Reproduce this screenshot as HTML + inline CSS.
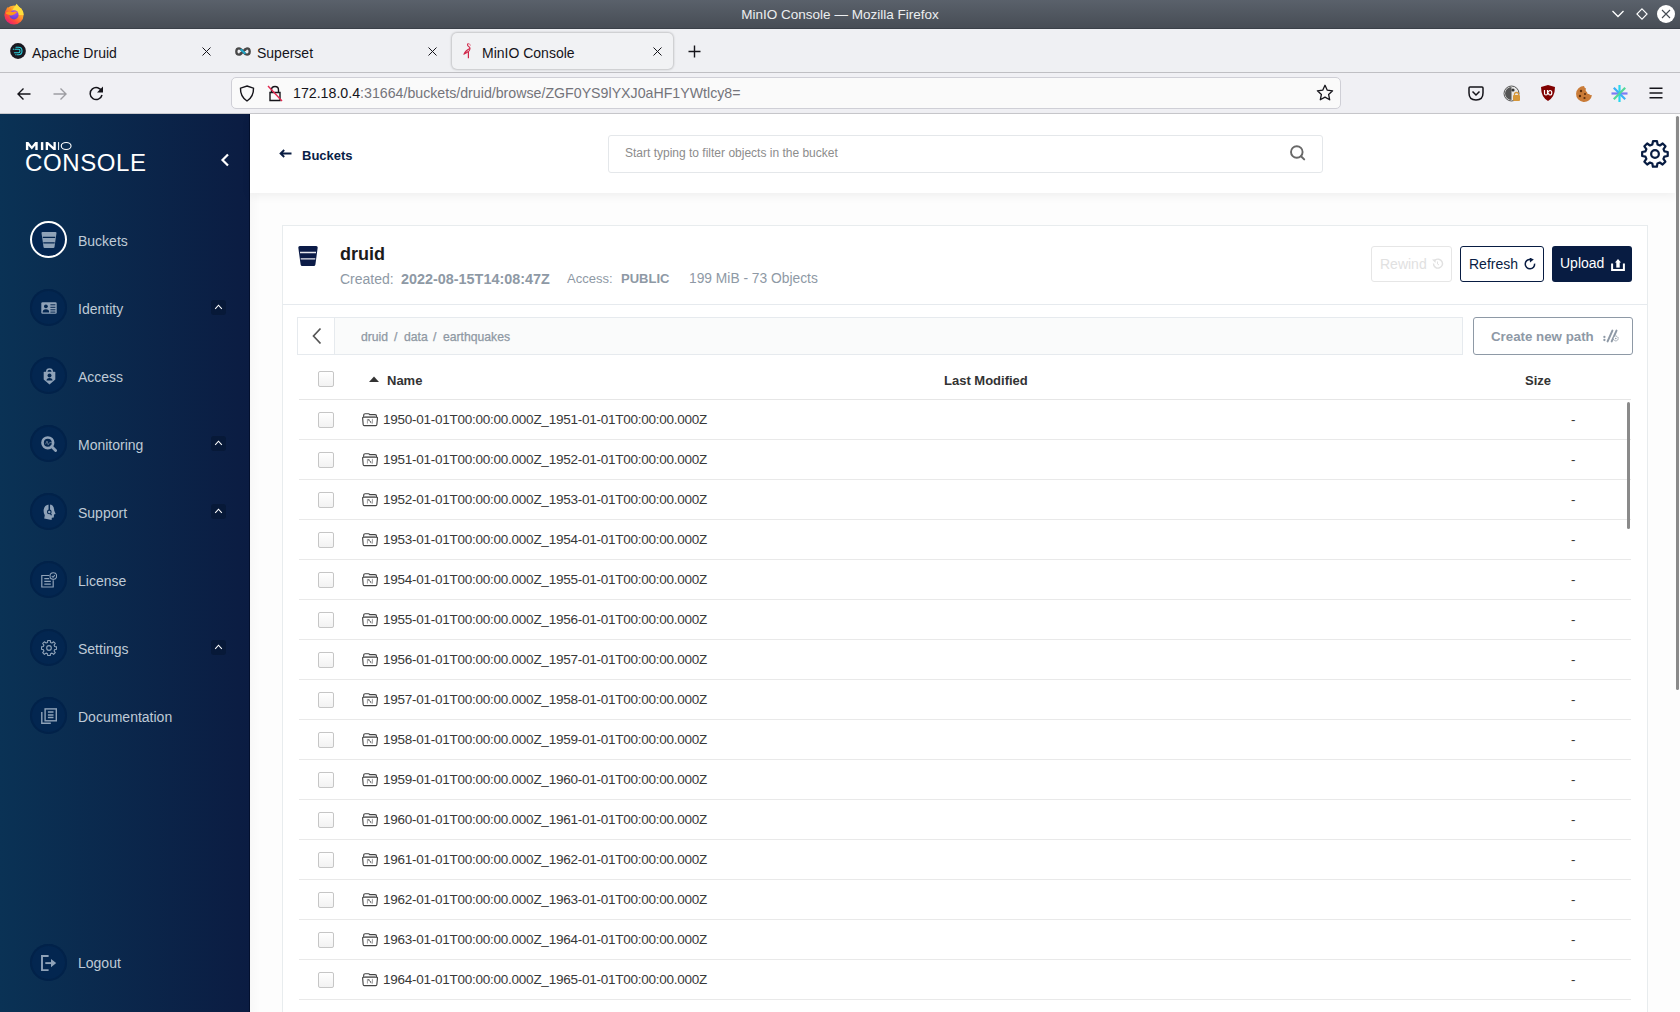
<!DOCTYPE html>
<html><head><meta charset="utf-8">
<style>
*{box-sizing:border-box;margin:0;padding:0}
html,body{width:1680px;height:1012px;overflow:hidden;font-family:"Liberation Sans",sans-serif;background:#fff}
.a{position:absolute;white-space:nowrap}
#titlebar{left:0;top:0;width:1680px;height:29px;background:linear-gradient(#5a616b,#474d55);border-bottom:1px solid #3a4048}
#tabbar{left:0;top:29px;width:1680px;height:43px;background:#eff0f3}
#navbar{left:0;top:72px;width:1680px;height:42px;background:#f0f0f4;border-top:1px solid #bfbfc3;border-bottom:1px solid #c9c9cd}
.tl{font-size:14px;line-height:14px;color:#15141a}
#acttab{left:452px;top:33px;width:221px;height:36px;background:#f1f2f4;border-radius:5px;box-shadow:0 0 2px 1px rgba(0,0,0,.18)}
#url{left:231px;top:77px;width:1110px;height:32px;background:#fafafa;border:1px solid #cfcfd6;border-radius:5px}
#sidebar{left:0;top:114px;width:250px;height:898px;background:linear-gradient(90deg,#0a3255 0%,#0b1c42 100%)}
.mi{left:30px;width:37px;height:37px;border-radius:50%;background:#032650;box-shadow:inset 0 0 0 2px #022249}
.ml{left:78px;font-size:14px;line-height:14px;color:#bfcad6}
.chev{left:211px;width:15px;height:15px;background:#071938;border-radius:3px}
#main{left:250px;top:114px;width:1430px;height:898px;background:#fdfdfd}
#hdr{left:250px;top:114px;width:1425px;height:79px;background:#fff;box-shadow:0 3px 9px rgba(0,0,0,.06)}
#card{left:282px;top:225px;width:1366px;height:800px;background:#fff;border:1px solid #e8ecee}
.row{left:299px;width:1332px;height:40px;border-bottom:1px solid #e9e9e9}
.cb{width:16px;height:16px;border:1px solid #c6c6c6;border-radius:2px;background:linear-gradient(#fff,#f2f2f2)}
.fn{font-size:13.5px;line-height:13px;color:#383838;letter-spacing:-.25px}
.bc{top:331px;font-size:12.2px;line-height:12px;color:#8e98a3;-webkit-text-stroke:.25px #8e98a3}
.btn{top:246px;height:36px;border-radius:3px;font-size:14px;line-height:14px}
</style></head><body>
<svg width="0" height="0" style="position:absolute">
<defs>
<g id="fold"><path d="M1.7 4.3 V2.1 Q1.7 .7 3.1 .7 H6.4 Q7.2 .7 7.7 1.6 H13.1 Q14.5 1.6 14.5 3 V4.2" fill="none" stroke="#444" stroke-width="1.15"/><path d="M2.6 3.6 H13.6" stroke="#9a9a9a" stroke-width=".9"/><path d="M.6 4.9 Q.6 4.2 1.3 4.2 H14.8 Q15.5 4.2 15.5 4.9 L14.8 11.7 Q14.7 12.6 13.8 12.6 H2.2 Q1.3 12.6 1.2 11.7 Z" fill="none" stroke="#444" stroke-width="1.15"/><path d="M5.4 5.9 V10.6 M10.4 5.9 V10.6" stroke="#a0a0a0" stroke-width="1"/><path d="M6.3 6.2 L9.5 10.3" stroke="#777" stroke-width=".8"/><circle cx="6.9" cy="6.9" r=".65" fill="#333"/><circle cx="8.6" cy="8.8" r=".6" fill="#444"/></g>
</defs></svg>
<!-- title bar -->
<div id="titlebar" class="a"></div>
<div class="a" style="left:0;top:8px;width:1680px;text-align:center;color:#eceef0;font-size:13.5px;line-height:14px">MinIO Console — Mozilla Firefox</div>
<svg class="a" style="left:3px;top:3px" width="22" height="22" viewBox="0 0 22 22"><defs><linearGradient id="ffg" x1="1" y1="0" x2=".2" y2="1"><stop offset="0" stop-color="#ffe94a"/><stop offset=".4" stop-color="#ffa22c"/><stop offset=".72" stop-color="#ff4a3a"/><stop offset="1" stop-color="#e3187f"/></linearGradient><radialGradient id="ffp" cx=".6" cy=".25" r=".8"><stop offset="0" stop-color="#b24cf0"/><stop offset="1" stop-color="#5a3fd6"/></radialGradient></defs><circle cx="11" cy="12" r="9.6" fill="url(#ffg)"/><path d="M9 7.5 Q11.5 4 13.6 .8 Q16 4 18.5 6 Q21 9 20.6 12 L14 12 Z" fill="#ffde3c"/><path d="M3.6 6.5 L4.8 3.8 L6 6.6 L7.4 4.4 L8 8 Z" fill="#ff8a1e"/><circle cx="11" cy="11.8" r="4.6" fill="url(#ffp)"/><path d="M3 9.5 Q6.5 7.8 10 9 Q12 7.6 14.5 9.4 Q12.5 9.6 12 11 Q9 13 7 12.2 Q5 11.5 3 10.8 Z" fill="#ff9a1a"/></svg>
<svg class="a" style="left:1611px;top:9px" width="14" height="10" viewBox="0 0 14 10"><path d="M1.5 2 L7 7.5 L12.5 2" fill="none" stroke="#fff" stroke-width="1.3"/></svg>
<svg class="a" style="left:1636px;top:8px" width="12" height="12" viewBox="0 0 12 12"><path d="M6 .9 L11.1 6 L6 11.1 L.9 6 Z" fill="none" stroke="#fff" stroke-width="1.1"/></svg>
<svg class="a" style="left:1657px;top:5px" width="18" height="18" viewBox="0 0 18 18"><circle cx="9" cy="9" r="9" fill="#fff"/><path d="M5 5 L13 13 M13 5 L5 13" stroke="#454b53" stroke-width="1.1"/></svg>
<!-- tab bar -->
<div id="tabbar" class="a"></div>
<div id="acttab" class="a"></div>
<svg class="a" style="left:10px;top:43px" width="16" height="16" viewBox="0 0 16 16"><circle cx="8" cy="8" r="7.9" fill="#1a1820"/><path d="M6 4.3 H8.5 Q12 4.3 12 8 Q12 11.7 8.5 11.7 H7.3 M5 6.3 H8.6 Q10 6.3 10 8 Q10 9.7 8.6 9.7 H4.4" fill="none" stroke="#2bd3e0" stroke-width="1.1" stroke-linecap="round"/><circle cx="3.4" cy="6.2" r=".6" fill="#2bd3e0"/><circle cx="5.9" cy="11.7" r=".6" fill="#2bd3e0"/></svg>
<div class="a tl" style="left:32px;top:46px">Apache Druid</div>
<svg class="a" style="left:202px;top:47px" width="9" height="9" viewBox="0 0 9 9"><path d="M.5 .5 L8.5 8.5 M8.5 .5 L.5 8.5" stroke="#15141a" stroke-width="1"/></svg>
<svg class="a" style="left:235px;top:46.5px" width="16" height="9" viewBox="0 0 16 9"><path d="M8 4.5 C6.3 2 5.2 1.3 4 1.3 C2.2 1.3 1.3 2.7 1.3 4.5 C1.3 6.3 2.2 7.7 4 7.7 C5.2 7.7 6.3 7 8 4.5 C9.7 2 10.8 1.3 12 1.3 C13.8 1.3 14.7 2.7 14.7 4.5 C14.7 6.3 13.8 7.7 12 7.7 C10.8 7.7 9.7 7 8 4.5" fill="none" stroke="#484848" stroke-width="2.3"/><path d="M5.6 2.3 L10.4 6.7" stroke="#20a7c9" stroke-width="2.1"/><path d="M4.8 6.9 L6.6 5.6" stroke="#484848" stroke-width="2.1"/><path d="M9.6 3.3 L11.2 2.1" stroke="#484848" stroke-width="2.1"/></svg>
<div class="a tl" style="left:257px;top:46px">Superset</div>
<svg class="a" style="left:428px;top:47px" width="9" height="9" viewBox="0 0 9 9"><path d="M.5 .5 L8.5 8.5 M8.5 .5 L.5 8.5" stroke="#15141a" stroke-width="1"/></svg>
<svg class="a" style="left:462px;top:42px" width="11" height="17" viewBox="0 0 11 17"><path d="M6.5 1.6 Q5.5 1.6 5.5 2.8 Q5.5 3.8 6.7 4.5 Q8.2 5.3 8 6.8 Q7.8 8.6 6.3 9.7" fill="none" stroke="#d0284a" stroke-width="1.1"/><path d="M6.2 1.5 Q8.3 1.8 8.5 3.6" fill="none" stroke="#e06a80" stroke-width=".9"/><path d="M8 6.5 Q6 7.2 4.2 9 Q2.5 10.8 2.2 12 Q3.8 11.4 6.4 9.6" fill="none" stroke="#d0284a" stroke-width="1.2"/><path d="M6.4 9.5 V16.2" stroke="#d0284a" stroke-width="1.2"/></svg>
<div class="a tl" style="left:482px;top:46px">MinIO Console</div>
<svg class="a" style="left:653px;top:47px" width="9" height="9" viewBox="0 0 9 9"><path d="M.5 .5 L8.5 8.5 M8.5 .5 L.5 8.5" stroke="#15141a" stroke-width="1"/></svg>
<svg class="a" style="left:688px;top:45px" width="13" height="13" viewBox="0 0 13 13"><path d="M6.5 .5 V12.5 M.5 6.5 H12.5" stroke="#15141a" stroke-width="1.4"/></svg>
<!-- nav bar -->
<div id="navbar" class="a"></div>
<svg class="a" style="left:16px;top:86px" width="16" height="16" viewBox="0 0 16 16"><path d="M14.5 8 H2 M7.5 2.5 L2 8 L7.5 13.5" fill="none" stroke="#15141a" stroke-width="1.4"/></svg>
<svg class="a" style="left:52px;top:86px" width="16" height="16" viewBox="0 0 16 16"><path d="M1.5 8 H14 M8.5 2.5 L14 8 L8.5 13.5" fill="none" stroke="#9d9da2" stroke-width="1.4"/></svg>
<svg class="a" style="left:88px;top:85px" width="17" height="17" viewBox="0 0 17 17"><path d="M13.8 6.5 A6 6 0 1 0 14 10" fill="none" stroke="#15141a" stroke-width="1.5"/><path d="M15 1.5 V7.5 H9 Z" fill="#15141a"/></svg>
<div id="url" class="a"></div>
<svg class="a" style="left:239px;top:85px" width="16" height="17" viewBox="0 0 16 17"><path d="M8 1 L14.5 3.2 Q14.8 11.5 8 16 Q1.2 11.5 1.5 3.2 Z" fill="none" stroke="#15141a" stroke-width="1.4"/></svg>
<svg class="a" style="left:267px;top:85px" width="16" height="17" viewBox="0 0 16 17"><path d="M4.5 7.5 V5 Q4.5 1.5 8 1.5 Q11.5 1.5 11.5 5 V7.5 M3 7.5 H13 V15.5 H3 Z" fill="none" stroke="#15141a" stroke-width="1.4"/><path d="M1 1 L15 16" stroke="#e22850" stroke-width="1.4"/></svg>
<div class="a" style="left:293px;top:86px;font-size:14.2px;line-height:14px;color:#74747a"><span style="color:#15141a">172.18.0.4</span>:31664/buckets/druid/browse/ZGF0YS9lYXJ0aHF1YWtlcy8=</div>
<svg class="a" style="left:1316px;top:84px" width="18" height="18" viewBox="0 0 18 18"><path d="M9 1.3 L11.3 6.2 L16.6 6.8 L12.6 10.4 L13.7 15.8 L9 13.1 L4.3 15.8 L5.4 10.4 L1.4 6.8 L6.7 6.2 Z" fill="none" stroke="#15141a" stroke-width="1.3" stroke-linejoin="round"/></svg>
<svg class="a" style="left:1468px;top:86px" width="16" height="15" viewBox="0 0 16 15"><path d="M2 1 H14 Q15 1 15 2 V7 Q15 14 8 14 Q1 14 1 7 V2 Q1 1 2 1 Z M4.5 5.5 L8 9 L11.5 5.5" fill="none" stroke="#15141a" stroke-width="1.5"/></svg>
<svg class="a" style="left:1503px;top:85px" width="18" height="18" viewBox="0 0 18 18"><circle cx="8.5" cy="8.5" r="7.5" fill="#e8e8e8" stroke="#555" stroke-width="1"/><path d="M8.5 2 A6.5 6.5 0 0 0 8.5 15 Z" fill="#555"/><circle cx="10" cy="5" r="1.6" fill="#333"/><rect x="10" y="10" width="7" height="6" rx="1" fill="#d6973a"/><path d="M11.5 10 V8.5 Q13.5 6.5 15.5 8.5 V10" fill="none" stroke="#d6973a" stroke-width="1.2"/></svg>
<svg class="a" style="left:1540px;top:84px" width="16" height="18" viewBox="0 0 16 18"><path d="M8 1 L15 3 Q15 13 8 17 Q1 13 1 3 Z" fill="#800000"/><path d="M4.5 6 V9.5 Q4.5 11 6 11 Q7.5 11 7.5 9.5 V6 M8.5 8.5 Q8.5 6.5 10 6.5 Q11.8 6.5 11.8 8.7 Q11.8 11 10 11 Q8.5 11 8.5 9" fill="none" stroke="#fff" stroke-width="1.2"/></svg>
<svg class="a" style="left:1575px;top:85px" width="18" height="18" viewBox="0 0 18 18"><path d="M9 1 A8 8 0 1 0 17 10 Q15 10.5 14 9 Q12 9.5 12 7 Q10 6 11 3.5 Q9.5 3 9 1 Z" fill="#c97b38"/><circle cx="6" cy="6" r="1.2" fill="#5a2e0e"/><circle cx="5" cy="11" r="1.2" fill="#5a2e0e"/><circle cx="9.5" cy="13" r="1.1" fill="#5a2e0e"/><circle cx="10" cy="9" r="1" fill="#5a2e0e"/></svg>
<svg class="a" style="left:1610px;top:84px" width="19" height="19" viewBox="0 0 19 19"><path d="M9.5 1 V18" stroke="#27d7f0" stroke-width="2.2"/><path d="M1.5 9.5 H17.5" stroke="#7b7bf4" stroke-width="2.2"/><path d="M3.8 3.8 L15.2 15.2" stroke="#3ab0f6" stroke-width="2.2"/><path d="M15.2 3.8 L3.8 15.2" stroke="#52d89a" stroke-width="2.2"/></svg>
<svg class="a" style="left:1649px;top:87px" width="14" height="12" viewBox="0 0 14 12"><path d="M.5 1.2 H13.5 M.5 6 H13.5 M.5 10.8 H13.5" stroke="#15141a" stroke-width="1.4"/></svg>
<!-- sidebar -->
<div id="sidebar" class="a"></div>
<div class="a" style="left:249px;top:114px;width:1px;height:898px;background:#03102e"></div>
<svg class="a" style="left:25px;top:141px" width="48" height="10" viewBox="0 0 48 10"><path d="M.9 1.1 H3.4 L6.8 5.3 L10.2 1.1 H12.7 V9 H10.3 V4.6 L6.8 8.4 L3.3 4.6 V9 H.9 Z" fill="#fff"/><path d="M15.9 1.1 H18.3 V9 H15.9 Z" fill="#fff"/><path d="M20.7 1.1 H23 L28.5 6 V1.1 H30.8 V9 H28.5 L23 4.1 V9 H20.7 Z" fill="#fff"/><path d="M33.6 1.1 V9" stroke="#fff" stroke-width="1"/><ellipse cx="41.15" cy="5" rx="4.9" ry="3.55" fill="none" stroke="#fff" stroke-width="1.1"/></svg>
<div class="a" style="left:25px;top:151px;font-size:24px;line-height:24px;color:#fff;letter-spacing:.6px">CONSOLE</div>
<svg class="a" style="left:220px;top:153px" width="10" height="14" viewBox="0 0 10 14"><path d="M8 1.5 L2.5 7 L8 12.5" fill="none" stroke="#fff" stroke-width="2.2"/></svg>

<div class="a" style="left:30px;top:221px;width:37px;height:37px;border-radius:50%;background:#032550;border:2px solid #fff"></div>
<svg class="a" style="left:41px;top:232px" width="16" height="16" viewBox="0 0 16 16"><path d="M0.5 1 Q0.5 0 1.5 0 H14.5 Q15.5 0 15.5 1 L13.5 15 Q13.4 16 12.4 16 H3.6 Q2.6 16 2.5 15 Z" fill="#8fa2b8"/><path d="M1.8 5.3 H14.2 M2.3 10.8 H13.7" stroke="#032550" stroke-width="1.3"/></svg>
<div class="a ml" style="left:78px;top:234px">Buckets</div>

<div class="a mi" style="top:289px"></div>
<svg class="a" style="left:41px;top:300px" width="16" height="16" viewBox="0 0 16 16"><rect x=".3" y="2.3" width="15.4" height="11.5" rx="1.3" fill="#8fa2b8"/><circle cx="4.9" cy="6.3" r="1.9" fill="#032650"/><path d="M1.6 12.6 Q1.6 9.3 4.9 9.3 Q8.2 9.3 8.2 12.6 Z" fill="#032650"/><path d="M9.4 4.8 H14.4 M9.4 7.3 H14.4 M9.4 9.8 H14.4 M9.4 12.1 H14.4" stroke="#032650" stroke-width="1"/></svg>
<div class="a ml" style="top:302px">Identity</div>
<div class="a chev" style="top:300px"></div>
<svg class="a" style="left:213px;top:303px" width="11" height="8" viewBox="0 0 11 8"><path d="M2.2 5.9 L5.5 2.2 L8.8 5.9" fill="none" stroke="#fff" stroke-width="1.05"/></svg>

<div class="a mi" style="top:357px"></div>
<svg class="a" style="left:42.5px;top:367.5px" width="13" height="17" viewBox="0 0 13 17"><path d="M3.8 4 V3.2 Q3.8 .9 6.5 .9 Q9.2 .9 9.2 3.2 V4" fill="none" stroke="#8fa2b8" stroke-width="1.5"/><path d="M1.5 3.8 H11.5 Q12.3 3.8 12.3 4.6 V11.6 L6.5 16.6 L.7 11.6 V4.6 Q.7 3.8 1.5 3.8 Z" fill="#8fa2b8"/><circle cx="6.5" cy="7.4" r="2" fill="#032650"/><path d="M3.5 12.4 Q3.5 9.9 6.5 9.9 Q9.5 9.9 9.5 12.4 Z" fill="#032650"/></svg>
<div class="a ml" style="top:370px">Access</div>

<div class="a mi" style="top:425px"></div>
<svg class="a" style="left:41px;top:436px" width="16" height="16" viewBox="0 0 16 16"><circle cx="6.8" cy="6.8" r="5.3" fill="none" stroke="#8fa2b8" stroke-width="2.7"/><path d="M10.6 10.6 L14.6 14.6" stroke="#8fa2b8" stroke-width="2.8" stroke-linecap="round"/><path d="M4.6 8.2 L6 5 L7.2 8.8 L8.6 6.6 H11" fill="none" stroke="#6d8299" stroke-width=".8"/></svg>
<div class="a ml" style="top:438px">Monitoring</div>
<div class="a chev" style="top:436px"></div>
<svg class="a" style="left:213px;top:439px" width="11" height="8" viewBox="0 0 11 8"><path d="M2.2 5.9 L5.5 2.2 L8.8 5.9" fill="none" stroke="#fff" stroke-width="1.05"/></svg>

<div class="a mi" style="top:493px"></div>
<svg class="a" style="left:42.5px;top:504px" width="14" height="17" viewBox="0 0 14 17"><path d="M6.3 .6 Q.8 .9 .6 6.8 Q.6 9.6 1.8 11.3 L1.2 14.4 L8.6 16 L8.8 13.8 L10.8 13.4 L11 10.6 L12.6 10 L11.2 6.6 Q11 .6 6.3 .6 Z" fill="#8fa2b8"/><path d="M6.3 0 V6" stroke="#032650" stroke-width="1.5"/><circle cx="6.3" cy="7.9" r="1.8" fill="none" stroke="#032650" stroke-width="1.1"/><path d="M7.4 9.4 L8.5 11.2" stroke="#032650" stroke-width="1.1"/></svg>
<div class="a ml" style="top:506px">Support</div>
<div class="a chev" style="top:504px"></div>
<svg class="a" style="left:213px;top:507px" width="11" height="8" viewBox="0 0 11 8"><path d="M2.2 5.9 L5.5 2.2 L8.8 5.9" fill="none" stroke="#fff" stroke-width="1.05"/></svg>

<div class="a mi" style="top:561px"></div>
<svg class="a" style="left:41px;top:572px" width="16" height="16" viewBox="0 0 16 16"><path d="M8.3 3.5 H.8 V15 H12.2 V8.2" fill="none" stroke="#8fa2b8" stroke-width="1.2"/><path d="M3.3 6.7 H8.2 M3.3 9.3 H9.8 M3.3 12.1 H9.8" stroke="#8fa2b8" stroke-width="1.2"/><circle cx="12.3" cy="4.1" r="3.3" fill="none" stroke="#8fa2b8" stroke-width="1.1"/><path d="M10.8 4.2 L12 5.3 L13.8 3.1" fill="none" stroke="#8fa2b8" stroke-width="1.1"/></svg>
<div class="a ml" style="top:574px">License</div>

<div class="a mi" style="top:629px"></div>
<svg class="a" style="left:41px;top:640px" width="16" height="16" viewBox="0 0 24 24"><path d="M10.2 1 H13.8 L14.3 4 L16.4 4.9 L18.9 3.1 L21.4 5.6 L19.6 8.1 L20.5 10.2 L23.3 10.7 V14.3 L20.5 14.8 L19.6 16.9 L21.4 19.4 L18.9 21.9 L16.4 20.1 L14.3 21 L13.8 23.8 H10.2 L9.7 21 L7.6 20.1 L5.1 21.9 L2.6 19.4 L4.4 16.9 L3.5 14.8 L.7 14.3 V10.7 L3.5 10.2 L4.4 8.1 L2.6 5.6 L5.1 3.1 L7.6 4.9 L9.7 4 Z" transform="translate(0,-.4)" fill="none" stroke="#8fa2b8" stroke-width="1.7" stroke-linejoin="round"/><circle cx="12" cy="12" r="3.5" fill="none" stroke="#8fa2b8" stroke-width="1.7"/></svg>
<div class="a ml" style="top:642px">Settings</div>
<div class="a chev" style="top:640px"></div>
<svg class="a" style="left:213px;top:643px" width="11" height="8" viewBox="0 0 11 8"><path d="M2.2 5.9 L5.5 2.2 L8.8 5.9" fill="none" stroke="#fff" stroke-width="1.05"/></svg>

<div class="a mi" style="top:697px"></div>
<svg class="a" style="left:41px;top:708px" width="16" height="16" viewBox="0 0 16 16"><path d="M.8 4 V15.2 H9.8" fill="none" stroke="#8fa2b8" stroke-width="1.4"/><rect x="4.1" y=".9" width="11.2" height="11.9" fill="none" stroke="#8fa2b8" stroke-width="1.4"/><path d="M6.9 4.1 H12.5 M6.9 6.9 H12.5 M6.9 9.6 H12.5" stroke="#8fa2b8" stroke-width="1.5"/></svg>
<div class="a ml" style="top:710px">Documentation</div>

<div class="a mi" style="top:944px"></div>
<svg class="a" style="left:41px;top:955px" width="16" height="16" viewBox="0 0 16 16"><path d="M7.6 1 H1 V15.2 H7.6" fill="none" stroke="#8fa2b8" stroke-width="1.9"/><path d="M4.3 8.1 H11" stroke="#8fa2b8" stroke-width="1.9"/><path d="M10 4 L15.2 8.1 L10 12.2 Z" fill="#8fa2b8"/></svg>
<div class="a ml" style="top:956px">Logout</div>
<!-- main -->
<div id="main" class="a"></div>
<div class="a" style="left:250px;top:114px;width:10px;height:898px;background:linear-gradient(90deg,rgba(0,0,0,.02),rgba(0,0,0,0))"></div>
<div id="hdr" class="a"></div>
<svg class="a" style="left:279px;top:149px" width="13" height="9" viewBox="0 0 13 9"><path d="M12.5 4.5 H2 M5.2 1 L1.6 4.5 L5.2 8" fill="none" stroke="#081c42" stroke-width="1.9"/></svg>
<div class="a" style="left:302px;top:149px;font-size:13px;line-height:13px;font-weight:bold;color:#082146">Buckets</div>
<div class="a" style="left:608px;top:135px;width:715px;height:38px;border:1px solid #e4e7ea;border-radius:3px;background:#fff"></div>
<div class="a" style="left:625px;top:147px;font-size:12px;line-height:12px;color:#8c8c8c">Start typing to filter objects in the bucket</div>
<svg class="a" style="left:1289px;top:144px" width="18" height="18" viewBox="0 0 18 18"><circle cx="7.8" cy="8" r="5.8" fill="none" stroke="#686868" stroke-width="1.9"/><path d="M12 12.2 L15.2 15.4" stroke="#686868" stroke-width="2" stroke-linecap="round"/></svg>
<svg class="a" style="left:1641px;top:140px" width="28" height="28" viewBox="0 0 24 24"><path d="M10.3 1.6 H13.7 L14.2 4.4 L16.2 5.3 L18.6 3.6 L21 6 L19.3 8.4 L20.1 10.4 L22.9 10.9 V14.3 L20.1 14.8 L19.2 16.8 L20.9 19.2 L18.5 21.6 L16.1 19.9 L14.1 20.7 L13.6 23.5 H10.2 L9.7 20.7 L7.7 19.9 L5.3 21.6 L2.9 19.2 L4.6 16.8 L3.8 14.8 L1 14.3 V10.9 L3.8 10.4 L4.6 8.4 L2.9 6 L5.3 3.6 L7.7 5.3 L9.7 4.4 Z" transform="translate(0,-.6)" fill="none" stroke="#081c42" stroke-width="1.9" stroke-linejoin="round"/><circle cx="12" cy="12" r="3.3" fill="none" stroke="#081c42" stroke-width="1.9"/></svg>

<div id="card" class="a"></div>
<svg class="a" style="left:298px;top:246px" width="20" height="20" viewBox="0 0 20 20"><path d="M0.3 1.5 Q0.3 0 1.8 0 H18.2 Q19.7 0 19.7 1.5 L17.4 18.5 Q17.2 20 15.7 20 H4.3 Q2.8 20 2.6 18.5 Z" fill="#0b1b47"/><path d="M2 6.5 H18 M2.7 12.8 H17.3" stroke="#e8e8ee" stroke-width="1.3"/></svg>
<div class="a" style="left:340px;top:245px;font-size:18px;line-height:18px;font-weight:bold;color:#1b1b1b">druid</div>
<div class="a" style="left:340px;top:272px;font-size:14px;line-height:14px;color:#8e99a5">Created:</div>
<div class="a" style="left:401px;top:272px;font-size:14.4px;line-height:14px;font-weight:bold;color:#8e99a5">2022-08-15T14:08:47Z</div>
<div class="a" style="left:567px;top:272px;font-size:13px;line-height:14px;color:#8e99a5">Access:</div>
<div class="a" style="left:621px;top:272px;font-size:13px;line-height:14px;font-weight:bold;color:#8e99a5">PUBLIC</div>
<div class="a" style="left:689px;top:272px;font-size:13.8px;line-height:14px;color:#8e99a5">199 MiB - 73 Objects</div>

<div class="a btn" style="left:1371px;width:81px;border:1px solid #e6e6e6;color:#e1e1e1"><span class="a" style="left:8px;top:10px">Rewind</span></div>
<svg class="a" style="left:1431px;top:257px" width="13" height="13" viewBox="0 0 13 13"><path d="M2.5 6.5 A4.5 4.5 0 1 0 4 3.3" fill="none" stroke="#e1e1e1" stroke-width="1.4"/><path d="M1 2.5 L4.8 2.2 L4.5 6 Z" fill="#e1e1e1"/><path d="M6.5 4.5 V7 L8 8" fill="none" stroke="#e1e1e1" stroke-width="1"/></svg>
<div class="a btn" style="left:1460px;width:84px;border:1px solid #081c42;color:#081c42;background:#fff"><span class="a" style="left:8px;top:10px">Refresh</span></div>
<svg class="a" style="left:1524px;top:258px" width="13" height="13" viewBox="0 0 13 13"><path d="M10.6 5.6 A4.7 4.7 0 1 1 6.2 1.4" fill="none" stroke="#081c42" stroke-width="1.5"/><path d="M5.6 -.6 L9.8 1.6 L6 4.4 Z" fill="#081c42"/></svg>
<div class="a btn" style="left:1552px;width:80px;background:#081c42;color:#fff"><span class="a" style="left:8px;top:10px">Upload</span></div>
<svg class="a" style="left:1611px;top:258px" width="14" height="13" viewBox="0 0 14 13"><path d="M1.1 5.5 V11.9 H12.9 V5.5" fill="none" stroke="#fff" stroke-width="2"/><path d="M4 4.6 L7 1 L10 4.6 Z" fill="#fff"/><rect x="5.3" y="4" width="3.4" height="5.6" fill="#fff"/></svg>

<div class="a" style="left:283px;top:304px;width:1364px;height:1px;background:#e6eaee"></div>
<div class="a" style="left:297px;top:317px;width:1166px;height:38px;border:1px solid #e6eaee;background:#fafbfb"></div>
<div class="a" style="left:298px;top:318px;width:37px;height:36px;background:#fff;border-right:1px solid #e6eaee"></div>
<svg class="a" style="left:311px;top:327px" width="12" height="18" viewBox="0 0 12 18"><path d="M9.5 1.5 L2.5 9 L9.5 16.5" fill="none" stroke="#555" stroke-width="1.7"/></svg>
<div class="a bc" style="left:361px">druid</div><div class="a bc" style="left:394px">/</div><div class="a bc" style="left:404px">data</div><div class="a bc" style="left:433px">/</div><div class="a bc" style="left:443px">earthquakes</div>
<div class="a" style="left:1473px;top:317px;width:160px;height:38px;border:1px solid #8e99a6;border-radius:3px;background:#fff"></div>
<div class="a" style="left:1491px;top:330px;font-size:13.3px;line-height:13px;font-weight:bold;color:#8e99a6">Create new path</div>
<svg class="a" style="left:1600px;top:328px" width="20" height="16" viewBox="0 0 20 16"><circle cx="4.4" cy="8.9" r="1.15" fill="#8e99a6"/><circle cx="4.4" cy="12" r="1.15" fill="#8e99a6"/><path d="M12.4 2.6 L7.6 13.4 M16.5 2.6 L11.7 13.4" stroke="#8e99a6" stroke-width="2" stroke-linecap="round"/><circle cx="15.8" cy="10.5" r="2.4" fill="#fff" stroke="#8e99a6" stroke-width="1" stroke-dasharray="1.2 .5"/><circle cx="15.8" cy="10.5" r=".8" fill="#8e99a6"/></svg>

<div class="a cb" style="left:318px;top:371px"></div>
<svg class="a" style="left:369px;top:376px" width="10" height="6" viewBox="0 0 10 6"><path d="M0 6 L5 0.5 L10 6 Z" fill="#333"/></svg>
<div class="a" style="left:387px;top:374px;font-size:13px;line-height:13px;font-weight:bold;color:#333">Name</div>
<div class="a" style="left:944px;top:374px;font-size:13px;line-height:13px;font-weight:bold;color:#333">Last Modified</div>
<div class="a" style="left:1525px;top:374px;font-size:13px;line-height:13px;font-weight:bold;color:#333">Size</div>
<div class="a" style="left:299px;top:399px;width:1332px;height:1px;background:#e6e6e6"></div>
<div class="a row" style="top:400px"></div><div class="a cb" style="left:318px;top:412px"></div><svg class="a" style="left:362px;top:413px" width="16" height="14" viewBox="0 0 16 14"><use href="#fold"/></svg><div class="a fn" style="left:383px;top:413px">1950-01-01T00:00:00.000Z_1951-01-01T00:00:00.000Z</div><div class="a fn" style="left:1571px;top:413px">-</div>
<div class="a row" style="top:440px"></div><div class="a cb" style="left:318px;top:452px"></div><svg class="a" style="left:362px;top:453px" width="16" height="14" viewBox="0 0 16 14"><use href="#fold"/></svg><div class="a fn" style="left:383px;top:453px">1951-01-01T00:00:00.000Z_1952-01-01T00:00:00.000Z</div><div class="a fn" style="left:1571px;top:453px">-</div>
<div class="a row" style="top:480px"></div><div class="a cb" style="left:318px;top:492px"></div><svg class="a" style="left:362px;top:493px" width="16" height="14" viewBox="0 0 16 14"><use href="#fold"/></svg><div class="a fn" style="left:383px;top:493px">1952-01-01T00:00:00.000Z_1953-01-01T00:00:00.000Z</div><div class="a fn" style="left:1571px;top:493px">-</div>
<div class="a row" style="top:520px"></div><div class="a cb" style="left:318px;top:532px"></div><svg class="a" style="left:362px;top:533px" width="16" height="14" viewBox="0 0 16 14"><use href="#fold"/></svg><div class="a fn" style="left:383px;top:533px">1953-01-01T00:00:00.000Z_1954-01-01T00:00:00.000Z</div><div class="a fn" style="left:1571px;top:533px">-</div>
<div class="a row" style="top:560px"></div><div class="a cb" style="left:318px;top:572px"></div><svg class="a" style="left:362px;top:573px" width="16" height="14" viewBox="0 0 16 14"><use href="#fold"/></svg><div class="a fn" style="left:383px;top:573px">1954-01-01T00:00:00.000Z_1955-01-01T00:00:00.000Z</div><div class="a fn" style="left:1571px;top:573px">-</div>
<div class="a row" style="top:600px"></div><div class="a cb" style="left:318px;top:612px"></div><svg class="a" style="left:362px;top:613px" width="16" height="14" viewBox="0 0 16 14"><use href="#fold"/></svg><div class="a fn" style="left:383px;top:613px">1955-01-01T00:00:00.000Z_1956-01-01T00:00:00.000Z</div><div class="a fn" style="left:1571px;top:613px">-</div>
<div class="a row" style="top:640px"></div><div class="a cb" style="left:318px;top:652px"></div><svg class="a" style="left:362px;top:653px" width="16" height="14" viewBox="0 0 16 14"><use href="#fold"/></svg><div class="a fn" style="left:383px;top:653px">1956-01-01T00:00:00.000Z_1957-01-01T00:00:00.000Z</div><div class="a fn" style="left:1571px;top:653px">-</div>
<div class="a row" style="top:680px"></div><div class="a cb" style="left:318px;top:692px"></div><svg class="a" style="left:362px;top:693px" width="16" height="14" viewBox="0 0 16 14"><use href="#fold"/></svg><div class="a fn" style="left:383px;top:693px">1957-01-01T00:00:00.000Z_1958-01-01T00:00:00.000Z</div><div class="a fn" style="left:1571px;top:693px">-</div>
<div class="a row" style="top:720px"></div><div class="a cb" style="left:318px;top:732px"></div><svg class="a" style="left:362px;top:733px" width="16" height="14" viewBox="0 0 16 14"><use href="#fold"/></svg><div class="a fn" style="left:383px;top:733px">1958-01-01T00:00:00.000Z_1959-01-01T00:00:00.000Z</div><div class="a fn" style="left:1571px;top:733px">-</div>
<div class="a row" style="top:760px"></div><div class="a cb" style="left:318px;top:772px"></div><svg class="a" style="left:362px;top:773px" width="16" height="14" viewBox="0 0 16 14"><use href="#fold"/></svg><div class="a fn" style="left:383px;top:773px">1959-01-01T00:00:00.000Z_1960-01-01T00:00:00.000Z</div><div class="a fn" style="left:1571px;top:773px">-</div>
<div class="a row" style="top:800px"></div><div class="a cb" style="left:318px;top:812px"></div><svg class="a" style="left:362px;top:813px" width="16" height="14" viewBox="0 0 16 14"><use href="#fold"/></svg><div class="a fn" style="left:383px;top:813px">1960-01-01T00:00:00.000Z_1961-01-01T00:00:00.000Z</div><div class="a fn" style="left:1571px;top:813px">-</div>
<div class="a row" style="top:840px"></div><div class="a cb" style="left:318px;top:852px"></div><svg class="a" style="left:362px;top:853px" width="16" height="14" viewBox="0 0 16 14"><use href="#fold"/></svg><div class="a fn" style="left:383px;top:853px">1961-01-01T00:00:00.000Z_1962-01-01T00:00:00.000Z</div><div class="a fn" style="left:1571px;top:853px">-</div>
<div class="a row" style="top:880px"></div><div class="a cb" style="left:318px;top:892px"></div><svg class="a" style="left:362px;top:893px" width="16" height="14" viewBox="0 0 16 14"><use href="#fold"/></svg><div class="a fn" style="left:383px;top:893px">1962-01-01T00:00:00.000Z_1963-01-01T00:00:00.000Z</div><div class="a fn" style="left:1571px;top:893px">-</div>
<div class="a row" style="top:920px"></div><div class="a cb" style="left:318px;top:932px"></div><svg class="a" style="left:362px;top:933px" width="16" height="14" viewBox="0 0 16 14"><use href="#fold"/></svg><div class="a fn" style="left:383px;top:933px">1963-01-01T00:00:00.000Z_1964-01-01T00:00:00.000Z</div><div class="a fn" style="left:1571px;top:933px">-</div>
<div class="a row" style="top:960px"></div><div class="a cb" style="left:318px;top:972px"></div><svg class="a" style="left:362px;top:973px" width="16" height="14" viewBox="0 0 16 14"><use href="#fold"/></svg><div class="a fn" style="left:383px;top:973px">1964-01-01T00:00:00.000Z_1965-01-01T00:00:00.000Z</div><div class="a fn" style="left:1571px;top:973px">-</div><div class="a" style="left:1627px;top:402px;width:3px;height:127px;border-radius:2px;background:#8a8a8a"></div>
<div class="a" style="left:1676px;top:116px;width:3px;height:574px;border-radius:2px;background:#8a8a8a"></div>
</body></html>
